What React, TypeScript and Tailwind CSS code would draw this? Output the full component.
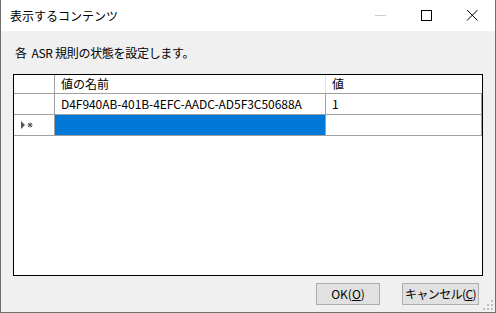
import React from 'react';

const font = { fontFamily: '"Noto Sans CJK JP", "Liberation Sans", sans-serif' };

function TitleBar() {
  return (
    <div className="flex h-[31px] items-center bg-white">
      <span className="ml-[9px] text-[12px] text-black">表示するコンテンツ</span>
      <div className="ml-auto flex h-full items-center">
        {/* minimize (disabled) */}
        <svg width="46" height="31" viewBox="0 0 46 31">
          <line x1="5" y1="15.5" x2="16" y2="15.5" stroke="#cccccc" strokeWidth="1" />
        </svg>
        <svg width="46" height="31" viewBox="0 0 46 31">
          <rect x="5.5" y="10.5" width="10" height="10" fill="none" stroke="#000" strokeWidth="1" />
        </svg>
        <svg width="33" height="31" viewBox="0 0 33 31">
          <path d="M5 10 L15.5 20.5 M15.5 10 L5 20.5" stroke="#000" strokeWidth="1" />
        </svg>
      </div>
    </div>
  );
}

function HeaderRow() {
  return (
    <div className="grid h-[19px] grid-cols-[41px_271px_156px] border-b border-[#a0a0a0] bg-white text-[12px] leading-[18px]">
      <div className="border-r border-[#a0a0a0]" />
      <div className="border-r border-[#e3e3e3] pl-[6px]">値の名前</div>
      <div className="pl-[6px]">値</div>
    </div>
  );
}

function DataRow({ name, value }: { name: string; value: string }) {
  return (
    <div className="grid h-[21px] grid-cols-[41px_271px_156px] border-b border-[#a0a0a0] bg-white text-[12px] leading-[20px]">
      <div className="border-r border-[#a0a0a0]" />
      <div className="border-r border-[#a0a0a0] pl-[6px] tracking-[-0.05px]">{name}</div>
      <div className="border-r border-[#a0a0a0] pl-[6px]">{value}</div>
    </div>
  );
}

function NewRow() {
  return (
    <div className="grid h-[21px] grid-cols-[41px_271px_156px] border-b border-[#a0a0a0] bg-white">
      <div className="flex items-center border-r border-[#a0a0a0] pl-[7px]">
        <svg width="14" height="8" viewBox="0 0 14 8">
          <path d="M0 0 L4 4 L0 8 Z" fill="#555" />
          <path d="M7 2 L11 6 M11 2 L7 6 M9 1.5 L9 6.5 M6.5 4 L11.5 4" stroke="#555" strokeWidth="1" />
        </svg>
      </div>
      <div className="border-r border-[#a0a0a0] bg-[#0078d7]" />
      <div className="border-r border-[#a0a0a0]" />
    </div>
  );
}

function WinButton({ children, w }: { children: React.ReactNode; w: string }) {
  return (
    <button
      className={`flex h-[22px] ${w} items-center justify-center whitespace-nowrap border border-[#adadad] bg-[#e1e1e1] px-0 text-[12px] text-black`}
    >
      {children}
    </button>
  );
}

export default function App() {
  return (
    <div
      className="flex h-[313px] w-[496px] flex-col border-x border-b border-[#707070] bg-[#f0f0f0]"
      style={font}
    >
      <TitleBar />
      <div className="relative flex flex-1 flex-col">
        <p className="ml-[14px] mt-[12px] text-[12px] leading-[20px] tracking-[-0.3px] text-black">
          各&nbsp; ASR 規則の状態を設定します。
        </p>
        <div className="ml-[12px] mt-[11px] h-[202px] w-[470px] border border-black bg-white">
          <HeaderRow />
          <DataRow name="D4F940AB-401B-4EFC-AADC-AD5F3C50688A" value="1" />
          <NewRow />
        </div>
        <div className="ml-[315px] mt-[7px] flex gap-[22px]">
          <WinButton w="w-[64px]">
            OK(<span className="underline">O</span>)
          </WinButton>
          <WinButton w="w-[77px] tracking-[-0.6px]">
            キャンセル(<span className="underline">C</span>)
          </WinButton>
        </div>
        {/* size grip */}
        <svg className="absolute bottom-[2px] right-[2px]" width="10" height="10" viewBox="0 0 10 10">
          <rect x="8" y="0" width="2" height="2" fill="#bfbfbf" />
          <rect x="4" y="4" width="2" height="2" fill="#bfbfbf" />
          <rect x="8" y="4" width="2" height="2" fill="#bfbfbf" />
          <rect x="0" y="8" width="2" height="2" fill="#bfbfbf" />
          <rect x="4" y="8" width="2" height="2" fill="#bfbfbf" />
          <rect x="8" y="8" width="2" height="2" fill="#bfbfbf" />
        </svg>
      </div>
    </div>
  );
}
